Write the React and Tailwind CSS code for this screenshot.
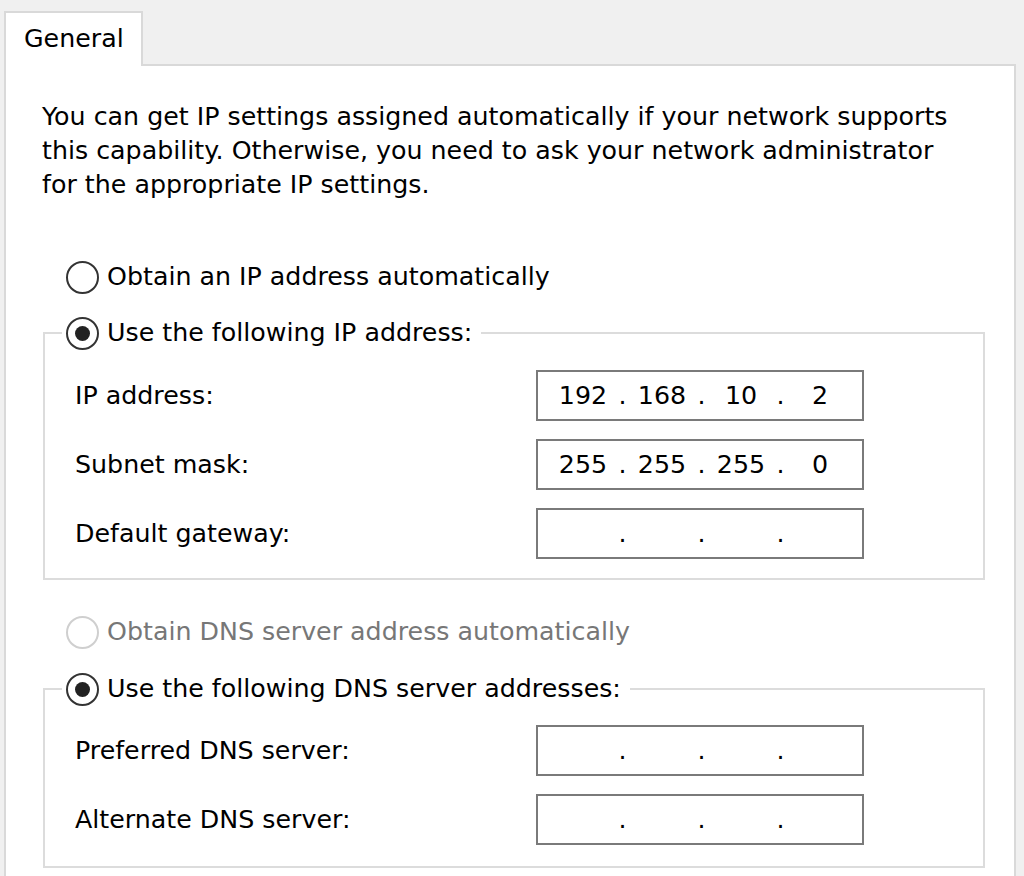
import React from "react";

const font = { fontFamily: '"DejaVu Sans", Verdana, sans-serif' };

function Radio({ checked, disabled }) {
  return (
    <span
      className={`flex h-[33px] w-[33px] shrink-0 items-center justify-center rounded-full border-[2.5px] bg-white ${
        disabled ? "border-[#cfcfcf]" : "border-[#333333]"
      }`}
    >
      {checked && <span className="h-[15px] w-[15px] rounded-full bg-[#222222]" />}
    </span>
  );
}

function RadioLabel({ checked, disabled, children }) {
  return (
    <span className="flex h-[34px] items-center gap-[8px]">
      <Radio checked={checked} disabled={disabled} />
      <span className={disabled ? "text-[#777777]" : "text-black"}>{children}</span>
    </span>
  );
}

function IpField({ octets }) {
  const cells = [];
  for (let i = 0; i < 4; i++) {
    cells.push(
      <span key={`o${i}`} className="w-[70px] text-center">
        {octets ? octets[i] : ""}
      </span>
    );
    if (i < 3)
      cells.push(
        <span key={`d${i}`} className="w-[9px] text-center">
          .
        </span>
      );
  }
  return (
    <div className="flex h-[51px] w-[328px] items-center border-2 border-[#7a7a7a] bg-white pl-[10px] pt-[1px]">
      {cells}
    </div>
  );
}

function FieldRow({ label, octets }) {
  return (
    <div className="flex items-center pl-[30px]">
      <span className="w-[461px]">{label}</span>
      <IpField octets={octets} />
    </div>
  );
}

export default function App() {
  return (
    <div
      className="flex h-[876px] w-[1024px] flex-col overflow-hidden bg-[#f0f0f0] pl-[4px] pr-[8px] pt-[11px] text-[25.3px] leading-[34px] text-black"
      style={font}
    >
      <div className="relative z-10 -mb-[2px] flex h-[55px] w-[139px] items-center border-2 border-b-0 border-[#d9d9d9] bg-white pb-[1px] pl-[18px]">
        General
      </div>
      <div className="flex-1 border-2 border-b-0 border-[#d9d9d9] bg-white pt-[34px]">
        <p className="pl-[36px]">
          You can get IP settings assigned automatically if your network supports
          <br />
          this capability. Otherwise, you need to ask your network administrator
          <br />
          for the appropriate IP settings.
        </p>

        <div className="mt-[58px] pl-[60px]">
          <RadioLabel>Obtain an IP address automatically</RadioLabel>
        </div>

        <fieldset className="ml-[37px] mt-[22px] w-[942px] border-2 border-[#dcdcdc] pb-[19px]">
          <legend className="ml-[17px] pl-[4px] pr-[9px]">
            <RadioLabel checked>Use the following IP address:</RadioLabel>
          </legend>
          <div className="mt-[20px] flex flex-col gap-[18px]">
            <FieldRow label="IP address:" octets={["192", "168", "10", "2"]} />
            <FieldRow label="Subnet mask:" octets={["255", "255", "255", "0"]} />
            <FieldRow label="Default gateway:" />
          </div>
        </fieldset>

        <div className="mt-[35px] pl-[60px]">
          <RadioLabel disabled>Obtain DNS server address automatically</RadioLabel>
        </div>

        <fieldset className="ml-[37px] mt-[23px] w-[942px] border-2 border-[#dcdcdc] pb-[21px]">
          <legend className="ml-[17px] pl-[4px] pr-[9px]">
            <RadioLabel checked>Use the following DNS server addresses:</RadioLabel>
          </legend>
          <div className="mt-[19px] flex flex-col gap-[18px]">
            <FieldRow label="Preferred DNS server:" />
            <FieldRow label="Alternate DNS server:" />
          </div>
        </fieldset>
      </div>
    </div>
  );
}
